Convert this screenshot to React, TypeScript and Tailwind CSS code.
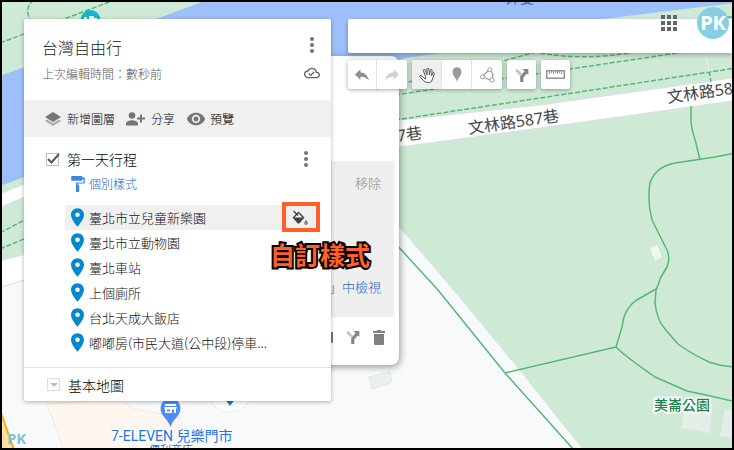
import React, { useState } from 'react';
import { MdOutlineCloudDone, MdRemoveRedEye } from 'react-icons/md';

interface Place {
    id: number;
    name: string;
}

const places: Place[] = [
    { id: 1, name: '臺北市立兒童新樂園' },
    { id: 2, name: '臺北市立動物園' },
    { id: 3, name: '臺北車站' },
    { id: 4, name: '上個廁所' },
    { id: 5, name: '台北天成大飯店' },
    { id: 6, name: '嘟嘟房(市民大道(公中段)停車...' },
];

const Dots: React.FC = () => (
    <svg viewBox="0 0 4 16" className="h-4 w-1 fill-[#757575]">
        <circle cx="2" cy="2" r="2" />
        <circle cx="2" cy="8" r="2" />
        <circle cx="2" cy="14" r="2" />
    </svg>
);

const PlacePin: React.FC = () => (
    <svg viewBox="5 2 14 20" className="h-[19px] w-[13px] shrink-0 fill-[#0288d1]">
        <path d="M12 2C8.13 2 5 5.13 5 9c0 5.25 7 13 7 13s7-7.75 7-13c0-3.87-3.13-7-7-7zm0 9.5a2.5 2.5 0 1 1 0-5 2.5 2.5 0 0 1 0 5z" />
    </svg>
);

const DirectionsIcon: React.FC = () => (
    <svg viewBox="0 0 14 14" className="h-3.5 w-3.5">
        <path d="M1.2 1.8l4.6 4.6" stroke="#c4c4c4" strokeWidth="2.8" fill="none" />
        <path d="M6.8 14V8.6L11 4.2" stroke="#858585" strokeWidth="3.2" fill="none" />
        <path d="M7.4 1H13.4V7z" fill="#858585" />
    </svg>
);

// Base map: river, park, roads, footpaths and map labels
const BaseMap: React.FC = () => (
    <svg
        viewBox="2 2 730 446"
        preserveAspectRatio="xMinYMin slice"
        className="absolute inset-0 h-full w-full bg-[#f8f9fb] font-['Noto_Sans','Noto_Sans_CJK_TC',sans-serif]"
    >
        <path d="M0 0H734V450H583L520 371L453 290L400 228L300 120L24 254L0 262z" fill="#ceead6" />
        <path d="M0 76L205 1L734 0V3L603 19L440 53L400 59L200 112L24 177L0 186z" fill="#9dc0fa" />

        {/* Roads */}
        <g fill="#fff" stroke="#dcdde2">
            <path d="M-4 196Q10 189 34 181V194Q12 201 -4 210z" />
            <path d="M-4 262L34 252V277L-4 289z" />
            <path d="M340 128L400 120L540 105L740 77V100L540 128L400 147L340 154z" />
        </g>
        <path d="M0 414L14 450H0z" fill="#fbe19a" />
        <path d="M1 413L14 450" stroke="#f2ab1c" strokeWidth="2" />
        <path d="M47 404L122 399L131 408L180 418L200 450H64z" fill="#fff7ef" stroke="#fae8cf" />

        {/* Buildings */}
        <g fill="#e6ede8">
            <path d="M684 410L713 405L709 433L681 428z" />
            <path d="M725 409L736 410V439L720 436z" />
            <path d="M650 248L657 245L662 257L655 261z" fill="#eff7f1" />
            <path d="M369 377L390 372L392 382L372 389z" fill="#efefef" stroke="#dcebe2" />
        </g>

        {/* Footpaths */}
        <g fill="none" stroke="#55b874" strokeWidth="1.5" strokeDasharray="5 2">
            <path d="M0 43L112 1" />
            <path d="M34 0Q24 7 30 20" />
            <path d="M0 233L26 219" />
            <path d="M0 249L26 238" />
            <path d="M395 85L503 61L536 52" />
            <path d="M540 53Q585 61 634 52" />
            <path d="M395 95L500 79L570 69L684 52" />
            <path d="M395 120L540 98L736 68" />
            <path d="M709 71L711 82" />
        </g>
        <path d="M706 53L709 72" stroke="#f0e6ee" strokeWidth="1.5" strokeDasharray="5 2" />
        <path d="M734 17h-8" stroke="#55b874" strokeWidth="1.5" />
        <g fill="none" stroke="#55b874" strokeWidth="1.5" strokeLinejoin="round">
            <path d="M691 106V122Q692 132 696 143L700 160" />
            <path d="M736 153L715 157L675 163Q655 167 650 183Q647 200 652 220L666 248Q671 257 667 267L661 277L656 290L655 303Q657 320 665 329L678 344Q690 353 709 362Q720 366 736 367" />
            <path d="M656 289L635 301Q627 308 624 317L622 327L616 347L505 373" />
            <path d="M395 243L438 290L505 373L574 450" />
            <path d="M616 347Q626 357 655 377L687 391L706 395L736 402" />
        </g>

        {/* Labels */}
        <g fill="#44474c" fontSize="16">
            <text transform="translate(469 134) rotate(-8)">文林路587巷</text>
            <text transform="translate(668 103) rotate(-8)">文林路587巷</text>
            <text transform="translate(332 151) rotate(-8)">文林路587巷</text>
        </g>
        <text x="506" y="3" fontSize="14" fill="#3b6fc9">外雙</text>
        <text x="654" y="410" fontSize="14" fontWeight="500" fill="#188048" stroke="#fff" strokeWidth="3" paintOrder="stroke">美崙公園</text>
        <g fill="#1a73e8" stroke="#fff" strokeWidth="2" paintOrder="stroke">
            <text x="149" y="454" fontSize="11">便利商店</text>
            <text x="111" y="441" fontSize="14" className="font-['Roboto','Noto_Sans_CJK_TC',sans-serif]">7-ELEVEN 兒樂門市</text>
        </g>

        {/* Store pin */}
        <path d="M170.500 427C168 419 160.500 416 160.500 408a10 10 0 0 1 20 0c0 8-7.500 11-10 19z" fill="#4f8df6" />
        <path d="M165 404h11v2h-11zM164 407h13l-1 2v4h-11v-4zM167 409.500v2h3v-2zM172 409.500v3.500h2v-3.500z" fill="#fff" fillRule="evenodd" />

        {/* Playground marker */}
        <circle cx="90.500" cy="20" r="10" fill="#12b5cb" />
        <path d="M84 17h3v3h-3zM89 16h5v2h3v3h-8z" fill="#fff" />

        {/* Selected place */}
        <circle cx="230" cy="390" r="22" fill="#fff" stroke="#ececec" />
        <path d="M230 406L222 395H238z" fill="#0288d1" />
        <text x="7" y="444" fontSize="15" fontWeight="700" fill="#82c3ce">PK</text>
    </svg>
);

const PlacePopup: React.FC = () => (
    <div className="absolute left-[59px] top-[54px] flex w-[338px] flex-col rounded-lg bg-white pt-[105px] shadow-[1px_2px_7px_rgba(0,0,0,0.4)]">
        <div className="mx-[5px] flex h-[156px] flex-col items-end justify-between bg-[#efefef] px-[13px] pb-5 pt-3 text-[13px] leading-5">
            <button className="font-light text-[#8a8a8a]">移除</button>
            <a href="#maps" className="font-light text-[#2f6ad0]">在「Google 地圖」中檢視</a>
        </div>
        <div className="flex h-12 items-center justify-end gap-[13px] pb-2 pr-[14px]">
            <button aria-label="相機">
                <svg viewBox="0 0 14 12" className="h-3 w-3.5 fill-[#757575]">
                    <path d="M5 0h4l1 1h3a1 1 0 0 1 1 1v9a1 1 0 0 1-1 1H1a1 1 0 0 1-1-1V2a1 1 0 0 1 1-1h3z" />
                </svg>
            </button>
            <button aria-label="路線"><DirectionsIcon /></button>
            <button aria-label="刪除">
                <svg viewBox="0 0 12 15" className="h-[15px] w-3 fill-[#808080]">
                    <path d="M0 1h3.500l1-1h3l1 1H12v2H0zM1 4h10v10a1 1 0 0 1-1 1H2a1 1 0 0 1-1-1z" />
                </svg>
            </button>
        </div>
    </div>
);

const toolButton = 'flex h-[29px] w-[29px] items-center justify-center';
const toolGroup = 'flex divide-x divide-[#e3e3e3] overflow-hidden rounded-xs bg-white shadow-[0_1px_4px_rgba(0,0,0,0.35)]';

const Toolbar: React.FC = () => (
    <div className="flex gap-[5px]">
        <div className={toolGroup}>
            <button className={toolButton} aria-label="復原">
                <svg viewBox="3 5 18 15" className="h-3 w-3.5 fill-[#8f8f8f]">
                    <path d="M10 9V5l-7 7 7 7v-4.100c5 0 8.500 1.600 11 5.100-1-5-4-10-11-11z" />
                </svg>
            </button>
            <button className="flex h-[29px] w-[30px] items-center justify-center" aria-label="重做">
                <svg viewBox="3 5 18 15" className="h-3 w-3.5 fill-[#cfcfcf]">
                    <path d="M14 9V5l7 7-7 7v-4.100c-5 0-8.500 1.600-11 5.100 1-5 4-10 11-11z" />
                </svg>
            </button>
        </div>
        <div className={toolGroup}>
            <button className="flex h-[29px] w-[30px] items-center justify-center bg-[#efefef]" aria-label="選取">
                <svg viewBox="0 0 16 16" className="h-4 w-4 fill-white stroke-[#555]">
                    <path d="M5 11L2 8.500Q.5 8.200 1 9.700L4.500 13.700Q6 15.500 9 15.500H10.500Q13 15 13.500 12L15.300 6.500Q15 4.800 13.900 5.800L12.600 8.800L13.100 3Q12.300 1.600 11.300 2.800L10.500 8L9.700 1.500Q8.600 .3 7.900 1.800L8.200 8L5.800 2.500Q4.400 2 4.300 3.500L6.500 9.500V12z" strokeLinejoin="round" />
                </svg>
            </button>
            <button className="flex h-[29px] w-[30px] items-center justify-center" aria-label="新增標記">
                <svg viewBox="0 0 10 15" className="h-[15px] w-2.5 fill-[#999]">
                    <path d="M5 15C4.500 11 .5 9 .5 4.700a4.500 4.500 0 0 1 9 0C9.500 9 5.500 11 5 15z" />
                </svg>
            </button>
            <button className="flex h-[29px] w-[30px] items-center justify-center" aria-label="畫線">
                <svg viewBox="0 0 15 16" className="h-4 w-[15px] fill-none stroke-[#999]">
                    <path d="M3.500 8.500L8 4M4 10.500L10 13M11.500 4.500Q13.500 7.500 12.500 10.500" strokeWidth="1.200" />
                    <circle cx="9.800" cy="2.800" r="2" />
                    <circle cx="2.500" cy="9.800" r="2" />
                    <circle cx="12" cy="13" r="2.200" />
                </svg>
            </button>
        </div>
        <div className={toolGroup}>
            <button className={toolButton} aria-label="新增路線"><DirectionsIcon /></button>
        </div>
        <div className={toolGroup}>
            <button className={toolButton} aria-label="測量">
                <svg viewBox="0 0 19 9" className="h-[9px] w-[19px] fill-none stroke-[#959595]">
                    <path d="M.75.75h17.500v7.500H.75z" strokeWidth="1.500" />
                    <path d="M3.500 1v3M5.500 1v2M7.500 1v3M9.500 1v2M11.500 1v3M13.500 1v2M15.500 1v3" />
                </svg>
            </button>
        </div>
    </div>
);

const LayerPanel: React.FC = () => {
    const [layerVisible, setLayerVisible] = useState(true);
    const [activePlace, setActivePlace] = useState(1);

    return (
        <section className="relative w-[307px] shrink-0 rounded-xs bg-white shadow-[0_1px_4px_rgba(0,0,0,0.3)]">
            <header className="flex h-[81px] justify-between pl-[18px] pr-[11px] pt-[18px]">
                <div>
                    <h1 className="text-base leading-5 font-light text-[#222]">台灣自由行</h1>
                    <p className="mt-2 text-xs leading-[18px] font-light text-[#555]">上次編輯時間：數秒前</p>
                </div>
                <div className="flex flex-col items-center gap-3">
                    <button aria-label="地圖選項"><Dots /></button>
                    <MdOutlineCloudDone className="h-4 w-4 text-[#616161]" />
                </div>
            </header>

            {/* Actions */}
            <div className="flex h-[37px] items-center gap-[11px] bg-[#f0f0f0] pl-[21px] text-xs font-light text-black">
                <button className="flex items-center gap-1.5">
                    <svg viewBox="0 0 16 14" className="h-3.5 w-4">
                        <path d="M0 9l2-1.500 6 3.700 6-3.700L16 9l-8 5z" fill="#adadad" />
                        <path d="M8 0l8 5-8 5-8-5z" fill="#757575" />
                    </svg>
                    新增圖層
                </button>
                <button className="flex items-center gap-1.5">
                    <svg viewBox="0 0 19 14" className="h-3.5 w-[19px] fill-[#757575]">
                        <circle cx="6" cy="3.500" r="3.300" />
                        <path d="M0 13.500v-2C0 9.300 4 8.200 6 8.200s6 1.100 6 3.300v2zM14 2.500h2v3h3v2h-3v3h-2v-3h-3v-2h3z" />
                    </svg>
                    分享
                </button>
                <button className="flex items-center gap-1">
                    <MdRemoveRedEye className="h-5 w-5 text-[#757575]" />
                    預覽
                </button>
            </div>

            {/* Layer */}
            <div className="flex items-center justify-between pl-[22px] pr-[23px] pt-3">
                <label className="flex items-center gap-2 text-sm leading-5 font-light text-black">
                    <span className="relative flex">
                        <input
                            type="checkbox"
                            checked={layerVisible}
                            onChange={(e) => setLayerVisible(e.target.checked)}
                            className="h-[13px] w-[13px] appearance-none border border-[#bdbdbd]"
                        />
                        {layerVisible && (
                            <svg viewBox="0 0 13 13" className="pointer-events-none absolute inset-0 overflow-visible">
                                <path d="M2 6l3.500 3.500L13 1" stroke="#555" strokeWidth="2" fill="none" />
                            </svg>
                        )}
                    </span>
                    第一天行程
                </label>
                <button aria-label="圖層選項"><Dots /></button>
            </div>
            <button className="ml-[47px] mt-1.5 flex items-center gap-1 text-xs leading-[18px] font-light text-[#1767d2]">
                <svg viewBox="4 2 17 20" className="h-4 w-3.5 fill-[#3d85e0]">
                    <path d="M18 4V3c0-.55-.45-1-1-1H5c-.55 0-1 .45-1 1v4c0 .55.45 1 1 1h12c.55 0 1-.45 1-1V6h1.500v4H10v11c0 .55.45 1 1 1h2c.55 0 1-.45 1-1v-8h-2v-1.500h9V4h-3z" />
                </svg>
                個別樣式
            </button>

            <ul className="ml-[41px] mr-4 mt-3 pb-3">
                {places.map((place) => (
                    <li
                        key={place.id}
                        className={`flex h-[25px] items-center justify-between ${place.id === activePlace ? 'bg-[#f0f0f0]' : ''}`}
                    >
                        <button
                            onClick={() => setActivePlace(place.id)}
                            className="flex items-center gap-[5px] pl-1.5 text-[13px] leading-[18px] font-light text-[#111]"
                        >
                            <PlacePin />
                            {place.name}
                        </button>
                        {place.id === activePlace && (
                            <button aria-label="樣式" className="pr-[7px]">
                                <svg viewBox="0 0 16 15" className="h-[15px] w-4">
                                    <path d="M1.500 1L6 5.500M1 8L6.500 2.500L12 8" stroke="#424242" strokeWidth="1.400" fill="none" />
                                    <path d="M.5 7.500H12.500L7.500 13.200Q6.500 14 5.500 13.200z" fill="#424242" />
                                    <path d="M14 9.500Q16 12 16 13A1.900 1.900 0 0 1 12.200 13Q12.200 12 14 9.500z" fill="#858585" />
                                </svg>
                            </button>
                        )}
                    </li>
                ))}
            </ul>

            <div className="flex h-[34px] items-center gap-2 border-t border-[#e0e0e0] pl-[23px] text-sm leading-5 font-light text-black">
                <button aria-label="展開" className="flex h-[13px] w-[13px] items-center justify-center border border-[#dcdcdc]">
                    <svg viewBox="0 0 8 4" className="h-1 w-2 fill-[#bdbdbd]"><path d="M0 0h8L4 4z" /></svg>
                </button>
                基本地圖
            </div>

            {/* Callout on the style button */}
            <div className="pointer-events-none absolute left-[258px] top-[183px] h-[30px] w-[38px] border-4 border-[#ff5f28]" />
            <strong className="absolute left-[246px] top-[217px] whitespace-nowrap text-[25px] leading-9 font-bold text-[#ff5f28] [-webkit-text-stroke:4px_black] [paint-order:stroke_fill]">
                自訂樣式
            </strong>
        </section>
    );
};

const App: React.FC = () => {
    return (
        <main className="relative min-h-screen overflow-hidden border-2 border-black font-['Noto_Sans_CJK_TC',sans-serif]">
            <BaseMap />
            <PlacePopup />
            <div className="relative flex items-start gap-[17px] pb-10 pl-[22px] pt-[17px]">
                <div className="z-10"><LayerPanel /></div>
                <div className="flex min-w-0 flex-1 flex-col gap-[7px]">
                    <input
                        type="search"
                        aria-label="搜尋"
                        className="h-[34px] w-full rounded-l-xs bg-white px-3 text-sm shadow-[0_2px_5px_rgba(0,0,0,0.3)] outline-none"
                    />
                    <Toolbar />
                </div>
            </div>

            {/* Account */}
            <div className="absolute right-[3px] top-[5px] flex items-center gap-5">
                <button aria-label="應用程式">
                    <svg viewBox="0 0 16 16" className="h-4 w-4 fill-[#666]">
                        <path d="M0 0h4v4H0zM6 0h4v4H6zM12 0h4v4h-4zM0 6h4v4H0zM6 6h4v4H6zM12 6h4v4h-4zM0 12h4v4H0zM6 12h4v4H6zM12 12h4v4h-4z" />
                    </svg>
                </button>
                <button className="flex h-8 w-8 items-center justify-center rounded-full bg-[#86cfe2] font-['Noto_Sans',sans-serif] text-xl font-bold text-white">
                    PK
                </button>
            </div>
        </main>
    );
};

export default App;
